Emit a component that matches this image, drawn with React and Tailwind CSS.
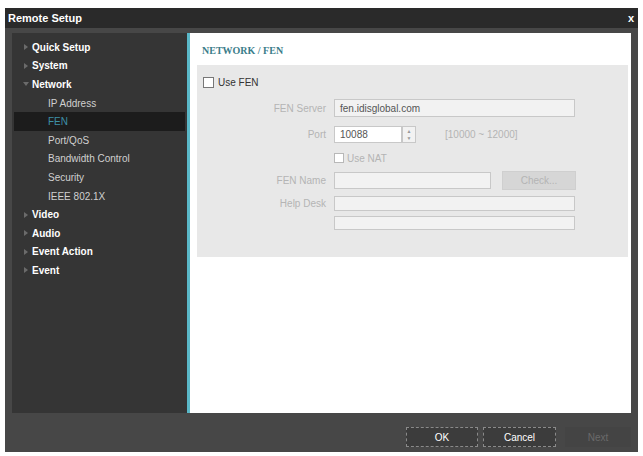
import { useState } from 'react';

const menu = [
  { label: 'Quick Setup', top: true },
  { label: 'System', top: true },
  { label: 'Network', top: true, open: true },
  { label: 'IP Address' },
  { label: 'FEN', active: true },
  { label: 'Port/QoS' },
  { label: 'Bandwidth Control' },
  { label: 'Security' },
  { label: 'IEEE 802.1X' },
  { label: 'Video', top: true },
  { label: 'Audio', top: true },
  { label: 'Event Action', top: true },
  { label: 'Event', top: true },
];

function Arrow({ open }) {
  return (
    <svg width="6" height="6" viewBox="0 0 6 6" className="shrink-0">
      {open ? <path d="M0 1 L6 1 L3 5 Z" fill="#6b6b6b" /> : <path d="M1 0 L5 3 L1 6 Z" fill="#6b6b6b" />}
    </svg>
  );
}

function Field({ label, className = '', children }) {
  return (
    <div className={`flex items-center gap-2 ${className}`}>
      <span className="w-[123px] text-right text-[#b4b4b4]">{label}</span>
      {children}
    </div>
  );
}

export default function App() {
  const [useFen, setUseFen] = useState(false);

  return (
    <div className="w-[643px] h-[456px] bg-white pt-[8px] px-[5px] pb-[4px]" style={{ fontFamily: '"Liberation Sans", Arial, sans-serif' }}>
      <div className="flex flex-col h-full bg-[#474747]">
        <div className="flex items-center justify-between h-[20px] bg-[#2a2a2a] px-[3px] text-white text-[11px] font-bold">
          <span>Remote Setup</span>
          <span className="pr-[1px] text-[11px]">x</span>
        </div>

        <div className="flex flex-1 mt-[5px] mx-[7px]">
          <div className="w-[175px] bg-[#353535] pt-[5px]">
            {menu.map((m) => (
              <div
                key={m.label}
                className={`flex items-center h-[18.6px] text-[10px] ${m.active ? 'bg-[#1c1c1c] text-[#3e8fa6] mx-[2px]' : ''} ${m.top ? 'pl-[11px] gap-[3px] font-bold text-white' : m.active ? 'pl-[34px]' : 'pl-[36px] text-[#d0d0d0]'}`}
              >
                {m.top && <Arrow open={m.open} />}
                <span>{m.label}</span>
              </div>
            ))}
          </div>

          <div className="flex-1 bg-white border-l-[3px] border-[#5ab8c8] pl-[7px] pr-[3px] h-[380px]">
            <div className="h-[32px] flex items-end pb-[7px] pl-[5px] text-[10px] font-bold text-[#3b7d8a]" style={{ fontFamily: '"Liberation Serif", serif' }}>
              NETWORK / FEN
            </div>
            <div className="bg-[#e8e8e8] h-[192px] pt-[12px] pl-[6px] text-[10px]">
              <label className="flex items-center gap-[4px] h-[11px] text-[#333]">
                <input
                  type="checkbox"
                  checked={useFen}
                  onChange={(e) => setUseFen(e.target.checked)}
                  className="appearance-none w-[11px] h-[11px] border border-[#777] bg-white m-0"
                />
                Use FEN
              </label>

              <div className="flex flex-col">
                <Field label="FEN Server" className="mt-[11px]">
                  <div className="w-[241px] h-[18px] border border-[#c8c8c8] bg-[#f2f2f2] pl-[5px] flex items-center text-[#555]">fen.idisglobal.com</div>
                </Field>
                <Field label="Port" className="mt-[9px]">
                  <div className="flex">
                    <div className="w-[68px] h-[17px] border border-[#c8c8c8] bg-white pl-[5px] flex items-center text-[#555]">10088</div>
                    <div className="w-[14px] h-[17px] border border-[#c8c8c8] bg-[#f2f2f2] flex flex-col items-center justify-center text-[5px] text-[#999] leading-[7px]">
                      <span>▲</span>
                      <span>▼</span>
                    </div>
                  </div>
                  <span className="ml-[21px] text-[#b4b4b4]">[10000 ~ 12000]</span>
                </Field>
                <div className="flex items-center gap-[3px] mt-[6px] pl-[131px] h-[18px] text-[#b4b4b4]">
                  <span className="w-[10px] h-[10px] border border-[#b8b8b8] bg-white" />
                  Use NAT
                </div>
                <Field label="FEN Name" className="mt-[4px]">
                  <div className="w-[157px] h-[17px] border border-[#c8c8c8] bg-[#f2f2f2]" />
                  <div className="ml-[3px] w-[74px] h-[19px] bg-[#d6d6d6] border border-[#cfcfcf] flex items-center justify-center text-[#b4b4b4]">Check...</div>
                </Field>
                <Field label="Help Desk" className="mt-[6px]">
                  <div className="w-[241px] h-[15px] border border-[#c8c8c8] bg-[#f2f2f2]" />
                </Field>
                <div className="pl-[131px] mt-[5px]">
                  <div className="w-[241px] h-[14px] border border-[#c8c8c8] bg-[#f2f2f2]" />
                </div>
              </div>
            </div>
          </div>
        </div>

        <div className="flex items-start justify-end gap-[5px] h-[39px] pt-[14px] pr-[7px] text-[10px]">
          <button className="w-[72px] h-[20px] bg-[#3c3c3c] border border-dashed border-[#8a8a8a] text-white">OK</button>
          <button className="w-[73px] h-[20px] bg-[#3c3c3c] border border-dashed border-[#8a8a8a] text-white">Cancel</button>
          <button className="w-[66px] h-[20px] ml-[4px] bg-[#444] text-[#6a6a6a]">Next</button>
        </div>
      </div>
    </div>
  );
}
